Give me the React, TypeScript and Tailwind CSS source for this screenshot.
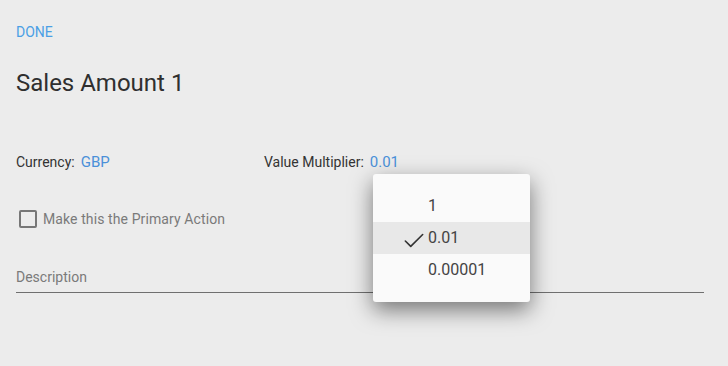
import { Check } from "lucide-react";

function App() {
  return (
    <div
      className="w-[728px] h-[366px] bg-[#ececec] relative overflow-hidden"
      style={{ fontFamily: "Roboto, sans-serif" }}
    >
      <div className="px-4 pt-[24px]">
        <div className="text-[14px] leading-4 text-[#4a9fe5]">DONE</div>
        <h1 className="mt-[29px] text-[24px] leading-7 text-[#2f2f2f]">Sales Amount 1</h1>

        <div className="mt-[55px] flex items-center h-5">
          <div className="w-[248px] flex items-center gap-[6px]">
            <span className="text-[14px] text-[#333]">Currency:</span>
            <span className="text-[15px] text-[#4a90d9]">GBP</span>
          </div>
          <div className="flex items-center gap-[6px]">
            <span className="text-[14px] text-[#333]">Value Multiplier:</span>
            <span className="text-[15px] text-[#4a90d9]">0.01</span>
          </div>
        </div>

        <label className="mt-[37px] ml-[3px] flex items-center gap-[6px] h-5">
          <span className="w-[18px] h-[18px] rounded-[2px] border-2 border-[#777] box-border" />
          <span className="text-[14px] text-[#7a7a7a] tracking-[0.1px]">Make this the Primary Action</span>
        </label>

        <div className="mt-[38px] w-[688px] h-[26px] border-b border-[#6f6f6f] text-[14px] text-[#7a7a7a] leading-5">
          Description
        </div>
      </div>

      <div className="absolute left-[373px] top-[174px] w-[157px] rounded-[3px] bg-[#fafafa] py-4 shadow-[0_8px_22px_rgba(0,0,0,0.5)] text-[16px] text-[#444]">
        <div className="h-8 flex items-center pl-[55px]">1</div>
        <div className="h-8 flex items-center pl-[55px] bg-[#e8e8e8] relative">
          <Check className="absolute left-[28px] top-[6px] w-[26px] h-[26px] text-[#333]" strokeWidth={1.5} />
          0.01
        </div>
        <div className="h-8 flex items-center pl-[55px]">0.00001</div>
      </div>
    </div>
  );
}

export default App;
